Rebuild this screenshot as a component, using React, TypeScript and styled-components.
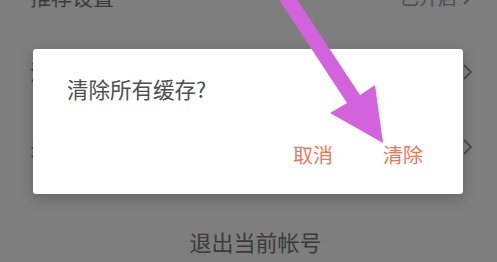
import React from "react";
import styled, { createGlobalStyle } from "styled-components";

const GlobalStyle = createGlobalStyle`
  html, body { margin: 0; padding: 0; }
  body { font-family: "Noto Sans CJK SC", "Noto Sans", sans-serif; }
`;

const Page = styled.div`
  position: relative;
  width: 497px;
  height: 262px;
  overflow: hidden;
  background: #7e7e7e;
`;

const List = styled.div`
  display: flex;
  flex-direction: column;
  margin-top: -41px;
`;

const Row = styled.div`
  height: 75px;
  display: flex;
  align-items: center;
  justify-content: space-between;
  padding: 0 25px 0 30px;
`;

const Label = styled.span`
  font-size: 21px;
  color: #3a3a3a;
  line-height: 1;
`;

const Value = styled.span`
  display: flex;
  align-items: center;
  gap: 6px;
  font-size: 19px;
  color: #4e4e4e;
  line-height: 1;
`;

const Chevron = styled.svg`
  width: 9px;
  height: 16px;
  display: block;
`;

const Logout = styled.div`
  margin-top: 37px;
  height: 40px;
  display: flex;
  align-items: center;
  justify-content: center;
  padding-left: 14px;
  font-size: 22px;
  color: #3a3a3a;
`;

const Dialog = styled.div`
  position: absolute;
  left: 33px;
  top: 49px;
  width: 430px;
  height: 145px;
  background: #ffffff;
  border-radius: 3px;
  box-shadow: 0 4px 14px rgba(0, 0, 0, 0.22);
  display: flex;
  flex-direction: column;
`;

const Title = styled.div`
  margin: 28px 0 0 34px;
  height: 24px;
  line-height: 24px;
  font-size: 21.5px;
  color: #4d4d4d;
`;

const Actions = styled.div`
  margin-top: 42px;
  display: flex;
  justify-content: flex-end;
  gap: 50px;
  padding-right: 40px;
`;

const ActionButton = styled.span`
  font-size: 20px;
  line-height: 24px;
  color: #e8785d;
`;

const Arrow = styled.svg`
  position: absolute;
  left: 0;
  top: 0;
  width: 497px;
  height: 262px;
  pointer-events: none;
`;

const ChevronIcon = () => (
  <Chevron viewBox="0 0 9 16">
    <path d="M1 1 L8 8 L1 15" fill="none" stroke="#4a4a4a" strokeWidth="1.8" />
  </Chevron>
);

export default function App() {
  return (
    <>
      <GlobalStyle />
      <Page>
        <List>
          <Row>
            <Label>推荐设置</Label>
            <Value>
              已开启
              <ChevronIcon />
            </Value>
          </Row>
          <Row>
            <Label>清除缓存</Label>
            <ChevronIcon />
          </Row>
          <Row>
            <Label>关于我们</Label>
            <ChevronIcon />
          </Row>
          <Logout>退出当前帐号</Logout>
        </List>
        <Dialog>
          <Title>清除所有缓存?</Title>
          <Actions>
            <ActionButton>取消</ActionButton>
            <ActionButton>清除</ActionButton>
          </Actions>
        </Dialog>
        <Arrow viewBox="0 0 497 262">
          <polygon
            points="276,-5 294,-5 360,95 375,85 383,143 330,113 347,103"
            fill="#d363dc"
          />
        </Arrow>
      </Page>
    </>
  );
}
